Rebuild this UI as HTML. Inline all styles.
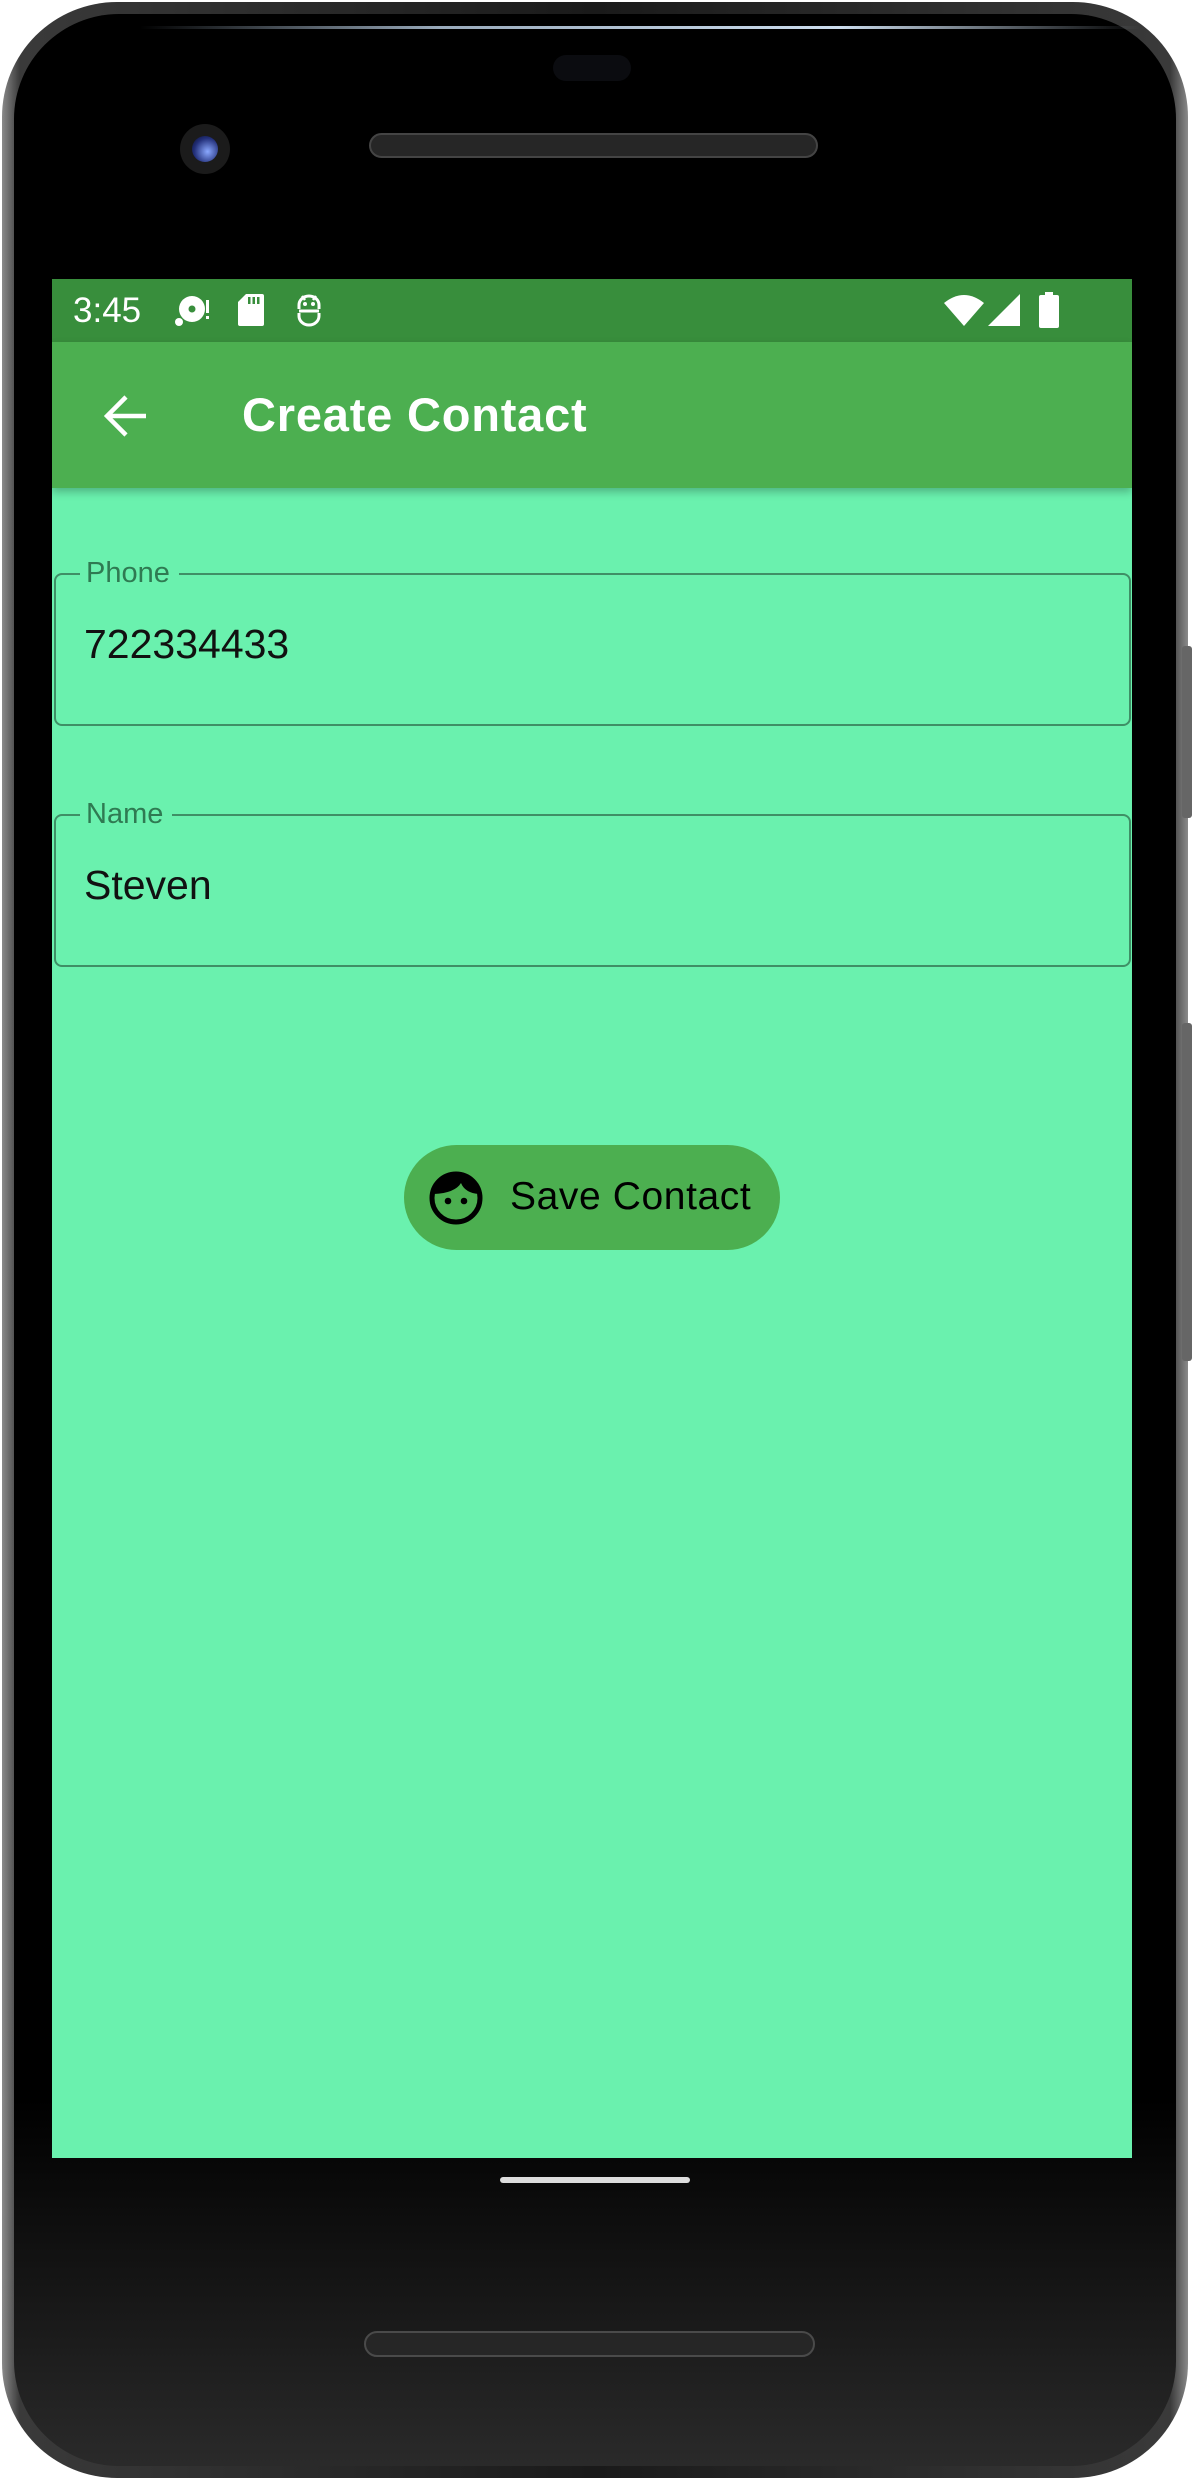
<!DOCTYPE html>
<html><head><meta charset="utf-8"><style>
*{margin:0;padding:0;box-sizing:border-box}
html,body{width:1194px;height:2480px;background:#fff;overflow:hidden;font-family:"Liberation Sans",sans-serif}
.phone{position:absolute;left:2px;top:2px;width:1186px;height:2476px;border-radius:115px;background:linear-gradient(90deg,#8a8a8a,#3a3a3a 1.5%,#1a1a1a 50%,#3a3a3a 98.5%,#8a8a8a);}
.inner{position:absolute;left:12px;top:12px;right:12px;bottom:12px;border-radius:105px;background:linear-gradient(180deg,#000 0%,#000 85%,#2a2a2a 100%);}
.btn{position:absolute;right:0;width:10px;background:#666;border-radius:3px}
.screen{position:absolute;left:52px;top:279px;width:1080px;height:1879px;background:#6af1ae;overflow:hidden}
.status{position:absolute;left:0;top:0;width:100%;height:63px;background:#388e3c;color:#fff}
.appbar{position:absolute;left:0;top:63px;width:100%;height:146px;background:#4caf50;box-shadow:0 4px 8px rgba(0,0,0,.25)}
.field{position:absolute;left:2px;width:1077px;height:153px;border:2.5px solid #3f8f66;border-radius:8px}
.lab{position:absolute;left:24px;top:-20px;background:#6af1ae;padding:0 9px 0 6px;font-size:29px;color:#2f7a52;line-height:36px}
.val{position:absolute;left:28px;top:44px;font-size:41px;color:#111;line-height:50px}
</style></head><body>
<div class="phone">
 <div class="btn" style="top:644px;height:172px;right:-4px"></div>
 <div class="btn" style="top:1021px;height:338px;right:-4px"></div>
 <div class="inner"></div>
</div>
<div style="position:absolute;left:140px;top:26px;width:1000px;height:3px;background:linear-gradient(90deg,transparent,#9ab 30%,#cde 70%,transparent)"></div>
<div style="position:absolute;left:553px;top:55px;width:78px;height:26px;border-radius:13px;background:#0b0c10"></div>
<div style="position:absolute;left:180px;top:124px;width:50px;height:50px;border-radius:50%;background:#1b1b1b"><div style="position:absolute;left:12px;top:12px;width:26px;height:26px;border-radius:50%;background:radial-gradient(circle at 60% 60%,#8aa8ff,#23307a 60%,#050820)"></div></div>
<div style="position:absolute;left:369px;top:133px;width:449px;height:25px;border-radius:13px;background:#262626;border:2px solid #444"></div>
<div style="position:absolute;left:364px;top:2331px;width:451px;height:26px;border-radius:13px;background:#262626;border:2px solid #4a4a4a"></div>
<div style="position:absolute;left:500px;top:2177px;width:190px;height:6px;border-radius:3px;background:#ddd"></div>

<div class="screen">
 <div class="status">
  <div style="position:absolute;left:21px;top:10px;font-size:35px;line-height:44px">3:45</div>
  <svg style="position:absolute;left:123px;top:16px" width="36" height="32" viewBox="0 0 36 32"><circle cx="17" cy="14" r="13" fill="#fff"/><circle cx="17" cy="14" r="3.5" fill="#388e3c"/><circle cx="4" cy="27" r="4" fill="#fff"/><rect x="31" y="5" width="3" height="13" fill="#fff"/><rect x="31" y="21" width="3" height="3" fill="#fff"/></svg>
  <svg style="position:absolute;left:185px;top:14px" width="28" height="34" viewBox="0 0 28 34"><path d="M9 1h16a2 2 0 0 1 2 2v28a2 2 0 0 1-2 2H3a2 2 0 0 1-2-2V9z" fill="#fff"/><rect x="11" y="4" width="2.5" height="7" fill="#388e3c"/><rect x="15.5" y="4" width="2.5" height="7" fill="#388e3c"/><rect x="20" y="4" width="2.5" height="7" fill="#388e3c"/></svg>
  <svg style="position:absolute;left:244px;top:14px" width="26" height="34" viewBox="0 0 26 34"><path d="M3 16V12a10 9 0 0 1 20 0v4M3 20v3a10 9 0 0 0 20 0v-3M3 18h20" stroke="#fff" stroke-width="3" fill="none"/><circle cx="9" cy="11" r="2" fill="#fff"/><circle cx="17" cy="11" r="2" fill="#fff"/><path d="M6 3l3 4M20 3l-3 4" stroke="#fff" stroke-width="2.5"/></svg>
  <svg style="position:absolute;left:892px;top:14px" width="40" height="34" viewBox="0 0 40 34"><path d="M0 10Q20-6 40 10L20 33z" fill="#fff"/></svg>
  <svg style="position:absolute;left:935px;top:14px" width="34" height="34" viewBox="0 0 34 34"><path d="M33 1V33H1z" fill="#fff"/></svg>
  <svg style="position:absolute;left:986px;top:13px" width="22" height="36" viewBox="0 0 22 36"><rect x="7" y="0" width="8" height="4" fill="#fff"/><rect x="1" y="3" width="20" height="33" rx="2" fill="#fff"/></svg>
 </div>
 <div class="appbar">
  <svg style="position:absolute;left:52px;top:52px" width="44" height="44" viewBox="0 0 44 44"><path d="M42 22H4M22 3L3 22l19 19" stroke="#fff" stroke-width="4.5" fill="none"/></svg>
  <div style="position:absolute;left:190px;top:45px;font-size:47px;font-weight:bold;color:#fff;line-height:56px;letter-spacing:0.8px">Create Contact</div>
 </div>
 <div class="field" style="top:294px"><div class="lab">Phone</div><div class="val">722334433</div></div>
 <div class="field" style="top:535px"><div class="lab">Name</div><div class="val">Steven</div></div>
 <div style="position:absolute;left:352px;top:866px;width:376px;height:105px;border-radius:53px;background:#4caf50">
  <svg style="position:absolute;left:25px;top:26px" width="54" height="54" viewBox="0 0 54 54"><circle cx="27" cy="27" r="24" stroke="#000" stroke-width="5" fill="none"/><path d="M5 23Q10 5 27 3Q45 4 50 23Q36 22 32 12Q26 22 5 23z" fill="#000"/><circle cx="19" cy="30" r="3.3" fill="#000"/><circle cx="35" cy="30" r="3.3" fill="#000"/></svg>
  <div style="position:absolute;left:106px;top:28px;font-size:39px;color:#000;line-height:48px;letter-spacing:0.6px">Save Contact</div>
 </div>
</div>
</body></html>
